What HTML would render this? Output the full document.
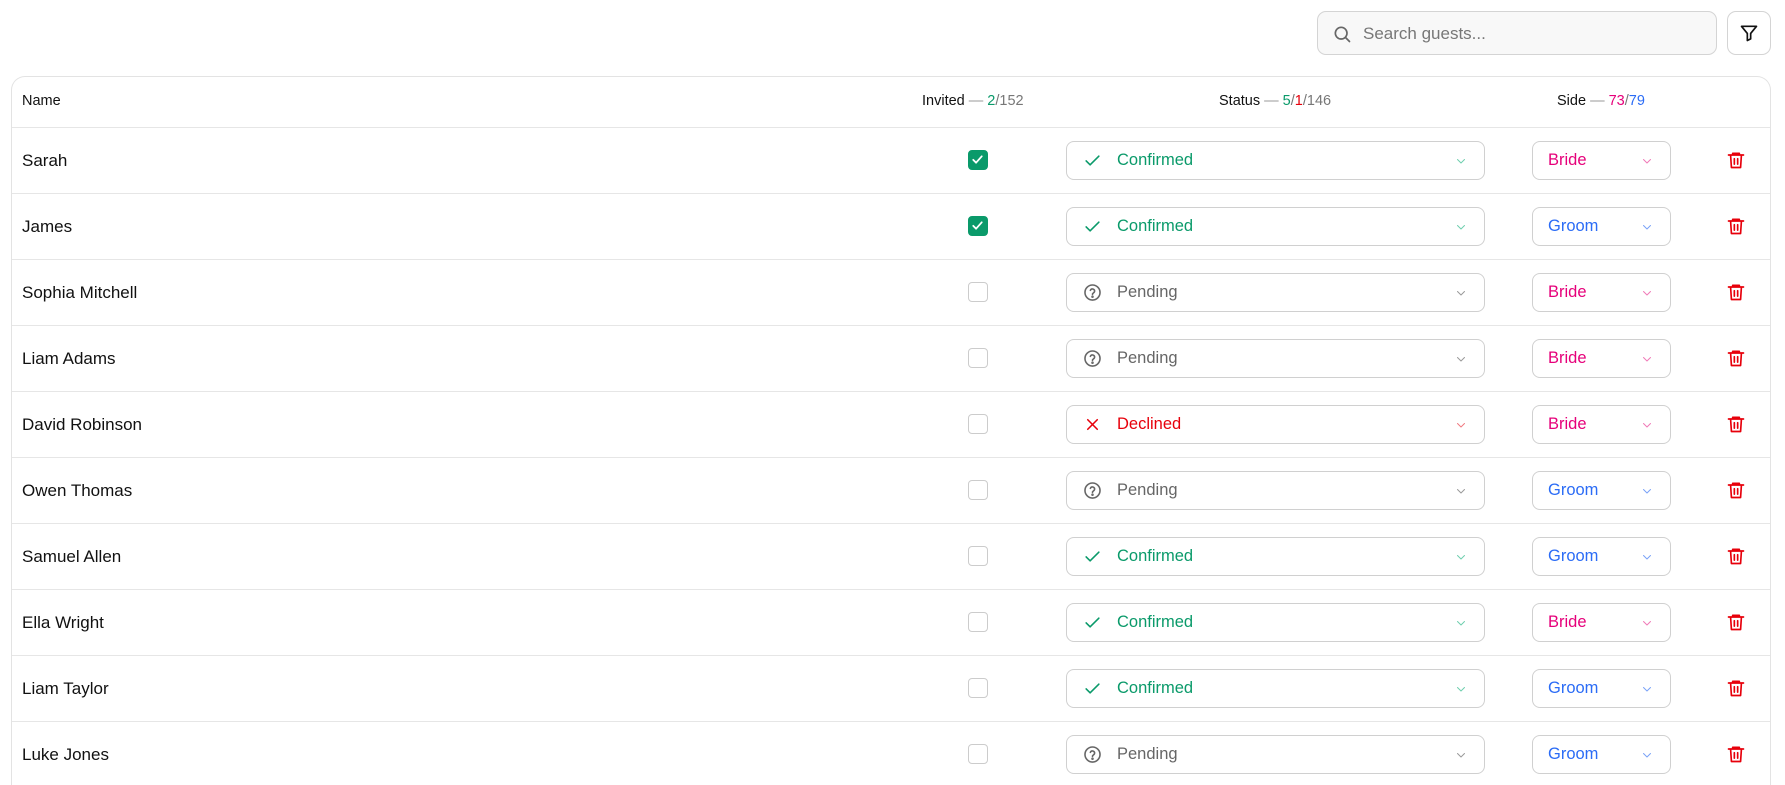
<!DOCTYPE html>
<html><head><meta charset="utf-8"><style>
*{box-sizing:border-box;margin:0;padding:0}
html,body{width:1785px;height:785px;overflow:hidden}
body{background:#fff;font-family:"Liberation Sans",sans-serif;color:#111;position:relative}
.abs{position:absolute}
.search{left:1317px;top:11px;width:400px;height:44px;border:1px solid #d4d4d4;border-radius:9px;background:#f8f8f8}
.search span{position:absolute;left:45px;top:12px;font-size:17px;color:#777}
.filter{left:1727px;top:11px;width:44px;height:44px;border:1px solid #d4d4d4;border-radius:9px;background:#fff}
.card{left:11px;top:76px;width:1760px;height:709px;border:1px solid #e3e3e3;border-bottom:none;border-radius:14px 14px 0 0}
.hd{font-size:14.5px;top:93px}
.line{left:12px;width:1758px;height:1px;background:#e6e6e6}
.name{left:22px;font-size:17px}
.cb{width:20px;height:20px;border-radius:4px;border:1.5px solid #ccc;left:968px}
.cb.on{background:#0a9a6a;border-color:#0a9a6a}
.sel{height:39px;border:1px solid #d0d0d0;border-radius:8px;background:#fff}
.st{left:1066px;width:419px}
.sd{left:1532px;width:139px}
.sel .t{position:absolute;top:9px;font-size:16.5px}
.st .t{left:50px}.sd .t{left:15px}
.sel svg.ch{position:absolute;top:13px}
.st svg.ch{right:17px}.sd svg.ch{right:17px}
.sel svg.ic{position:absolute;left:16px;top:9px}
.g{color:#0a9a6a}.r{color:#e7000b}.p{color:#666}.pk{color:#e6007a}.b{color:#2b6cf6}
.trash{left:1726px}
</style></head><body>
<div class="abs search"><svg class="abs" style="left:14px;top:12px" width="20" height="20" viewBox="0 0 24 24" fill="none" stroke="#666" stroke-width="2" stroke-linecap="round"><circle cx="11" cy="11" r="7"/><path d="M16.5 16.5L21 21"/></svg><span>Search guests...</span></div>
<div class="abs filter"><svg class="abs" style="left:11px;top:11px" width="20" height="20" viewBox="0 0 24 24" fill="none" stroke="#111" stroke-width="2" stroke-linejoin="round"><path d="M3 4h18l-7 8.5V19l-4 2v-8.5z"/></svg></div>
<div class="abs card"></div>
<div class="abs hd" style="left:22px">Name</div>
<div class="abs hd" style="left:922px">Invited <span style="color:#999">—</span> <span class="g">2</span><span style="color:#777">/152</span></div>
<div class="abs hd" style="left:1219px">Status <span style="color:#999">—</span> <span class="g">5</span><span style="color:#777">/</span><span class="r">1</span><span style="color:#777">/146</span></div>
<div class="abs hd" style="left:1557px">Side <span style="color:#999">—</span> <span class="pk">73</span><span style="color:#777">/</span><span class="b">79</span></div>
<div class="abs line" style="top:127px"></div>
<div id="rows"></div>
<script>
const rows=[["Sarah",1,"c","B"],["James",1,"c","G"],["Sophia Mitchell",0,"p","B"],["Liam Adams",0,"p","B"],["David Robinson",0,"d","B"],["Owen Thomas",0,"p","G"],["Samuel Allen",0,"c","G"],["Ella Wright",0,"c","B"],["Liam Taylor",0,"c","G"],["Luke Jones",0,"p","G"]];
let h="";
const chev=c=>`<svg class="ch" width="12" height="12" viewBox="0 0 24 24" fill="none" stroke="${c}" stroke-width="2" stroke-linecap="round" stroke-linejoin="round"><path d="M5 9l7 7 7-7"/></svg>`;
rows.forEach((r,i)=>{
 const t=127+66*i;
 h+=`<div class="abs name" style="top:${t+24}px">${r[0]}</div>`;
 h+=`<div class="abs cb ${r[1]?'on':''}" style="top:${t+23}px">${r[1]?'<svg width="17" height="17" viewBox="0 0 24 24" fill="none" stroke="#fff" stroke-width="2.5" stroke-linecap="round" stroke-linejoin="round"><path d="M6 12.5l4 4 8-9"/></svg>':''}</div>`;
 let ic,cls,txt,cc;
 if(r[2]=="c"){cls="g";txt="Confirmed";cc="#6fcfae";ic='<svg class="ic" width="19" height="19" viewBox="0 0 24 24" fill="none" stroke="#0a9a6a" stroke-width="2" stroke-linecap="round" stroke-linejoin="round"><path d="M4 12.5l5 5L20 6.5"/></svg>';}
 else if(r[2]=="p"){cls="p";txt="Pending";cc="#999";ic='<svg class="ic" width="19" height="19" viewBox="0 0 24 24" fill="none" stroke="#666" stroke-width="2" stroke-linecap="round"><circle cx="12" cy="12" r="9.5"/><path d="M9.3 9.3a2.8 2.8 0 0 1 5.4 1c0 1.9-2.7 2.4-2.7 4"/><circle cx="12" cy="17.3" r=".6" fill="#666"/></svg>';}
 else {cls="r";txt="Declined";cc="#f07a80";ic='<svg class="ic" width="19" height="19" viewBox="0 0 24 24" fill="none" stroke="#e7000b" stroke-width="2" stroke-linecap="round"><path d="M6 6l12 12M18 6L6 18"/></svg>';}
 h+=`<div class="abs sel st" style="top:${t+14}px">${ic}<span class="t ${cls}">${txt}</span>${chev(cc)}</div>`;
 const b=r[3]=="B";
 h+=`<div class="abs sel sd" style="top:${t+14}px"><span class="t ${b?'pk':'b'}">${b?'Bride':'Groom'}</span>${chev(b?'#f07ab8':'#7aa2f7')}</div>`;
 h+=`<svg class="abs trash" style="top:${t+23}px" width="20" height="20" viewBox="0 0 24 24" fill="none" stroke="#e7000b" stroke-width="2" stroke-linecap="round" stroke-linejoin="round"><path d="M3 6h18M8 6V4h8v2M5.5 6l1 15h11l1-15M10 10.5v6.5M14 10.5v6.5"/></svg>`;
 if(t+66<785) h+=`<div class="abs line" style="top:${t+66}px"></div>`;
});
document.getElementById("rows").innerHTML=h;
</script>
</body></html>
